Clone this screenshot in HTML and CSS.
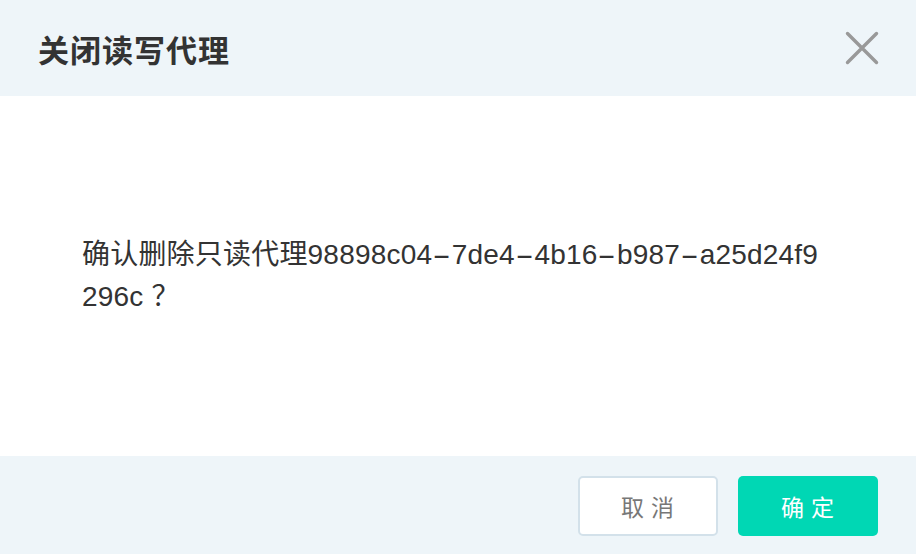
FILE: index.html
```html
<!DOCTYPE html>
<html lang="zh">
<head>
<meta charset="utf-8">
<link rel="stylesheet" href="styles.css">
</head>
<body>
<div class="dialog">
  <div class="header">
    <h1 class="title">关闭读写代理</h1>
    <button class="close" aria-label="close">
      <svg width="34" height="34" viewBox="0 0 34 34"><path d="M2.5 2.5 L31.5 31.5 M31.5 2.5 L2.5 31.5" stroke="#999" stroke-width="3.4" stroke-linecap="round" fill="none"/></svg>
    </button>
  </div>
  <div class="body">
    <p class="msg">确认删除只读代理98898c04<span class="dash">-</span>7de4<span class="dash">-</span>4b16<span class="dash">-</span>b987<span class="dash">-</span>a25d24f9296c ？</p>
  </div>
  <div class="footer">
    <button class="btn btn-cancel">取 消</button>
    <button class="btn btn-ok">确 定</button>
  </div>
</div>
</body>
</html>
```
FILE: styles.css
```css
html, body {
  margin: 0;
  padding: 0;
  background: #fff;
}
body {
  font-family: "Liberation Sans", "Noto Sans CJK SC", sans-serif;
  color: #333;
}
.dialog {
  width: 916px;
  height: 554px;
  display: flex;
  flex-direction: column;
}
.header {
  height: 96px;
  background: #eef5f9;
  display: flex;
  align-items: center;
  justify-content: space-between;
  padding: 0 38px 0 38px;
  box-sizing: border-box;
}
.title {
  margin: 0;
  font-family: "Noto Sans CJK SC", sans-serif;
  font-size: 31px;
  font-weight: 700;
  color: #333;
  letter-spacing: 1px;
}
.close {
  border: 0;
  background: none;
  padding: 0;
  margin-right: -1px;
  width: 34px;
  height: 34px;
  display: flex;
}
.body {
  height: 360px;
  display: flex;
  align-items: center;
  padding: 0 82px;
}
.msg {
  margin: 0;
  max-width: 744px;
  font-size: 28px;
  line-height: 42px;
  word-break: break-all;
  letter-spacing: 0.2px;
  color: #333;
}
.dash {
  display: inline-block;
  margin: 0 5px;
  transform: scaleX(2);
}
.footer {
  flex: 1;
  background: #eef5f9;
  display: flex;
  justify-content: flex-end;
  align-items: center;
  gap: 20px;
  padding: 2px 38px 0 0;
}
.btn {
  width: 140px;
  height: 60px;
  border-radius: 5px;
  font-family: "Noto Sans CJK SC", sans-serif;
  font-size: 23px;
  letter-spacing: 1px;
  cursor: pointer;
}
.btn-cancel {
  background: #fff;
  border: 2px solid #d3e1ea;
  color: #777;
}
.btn-ok {
  background: #00d7b4;
  border: 0;
  color: #fff;
}
```
